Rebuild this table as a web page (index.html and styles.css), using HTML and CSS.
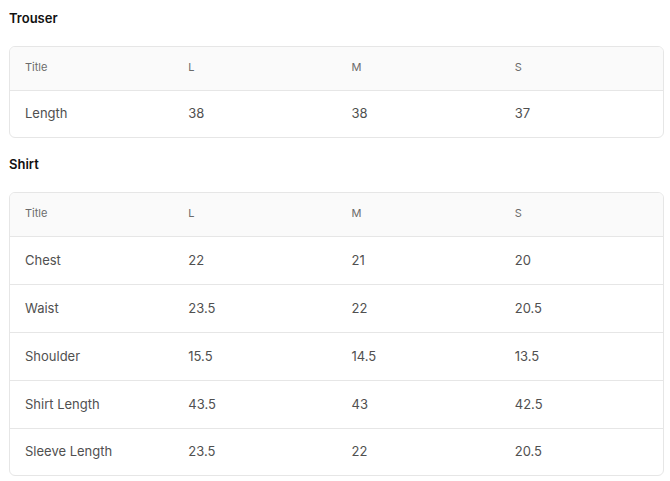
FILE: index.html
```html
<!DOCTYPE html>
<html>
<head>
<meta charset="utf-8">
<link rel="stylesheet" href="styles.css">
</head>
<body>
<div class="page">
  <h2 class="title">Trouser</h2>
  <div class="card">
    <table class="sizes">
      <thead><tr><th>Title</th><th>L</th><th>M</th><th>S</th></tr></thead>
      <tbody>
        <tr><td>Length</td><td>38</td><td>38</td><td>37</td></tr>
      </tbody>
    </table>
  </div>
  <h2 class="title">Shirt</h2>
  <div class="card">
    <table class="sizes">
      <thead><tr><th>Title</th><th>L</th><th>M</th><th>S</th></tr></thead>
      <tbody>
        <tr><td>Chest</td><td>22</td><td>21</td><td>20</td></tr>
        <tr><td>Waist</td><td>23.5</td><td>22</td><td>20.5</td></tr>
        <tr><td>Shoulder</td><td>15.5</td><td>14.5</td><td>13.5</td></tr>
        <tr><td>Shirt Length</td><td>43.5</td><td>43</td><td>42.5</td></tr>
        <tr><td>Sleeve Length</td><td>23.5</td><td>22</td><td>20.5</td></tr>
      </tbody>
    </table>
  </div>
</div>
</body>
</html>
```
FILE: styles.css
```css
html, body { margin: 0; padding: 0; background: #fff; }
body { font-family: Inter, "Noto Sans", sans-serif; }
.page { padding: 8px 0 0 9px; width: 655px; }
.title {
  margin: 0 0 18px 0;
  font-size: 13px;
  line-height: 20px;
  font-weight: 600;
  color: #111;
}
.card {
  border: 1px solid #e6e6e6;
  border-radius: 6px;
  overflow: hidden;
  margin-bottom: 16px;
}
.sizes {
  width: 100%;
  border-collapse: collapse;
  table-layout: fixed;
}
.sizes th {
  background: #fafafa;
  height: 40px;
  padding: 0 15px 3px 15px;
  text-align: left;
  font-size: 11px;
  font-weight: 400;
  color: #6b6b6b;
  border-bottom: 1px solid #e6e6e6;
}
.sizes td {
  height: 45px;
  padding: 0 15px 2px 15px;
  font-size: 13px;
  color: #505050;
  border-bottom: 1px solid #e6e6e6;
}
.sizes tr:last-child td { border-bottom: none; height: 44px; }
```
